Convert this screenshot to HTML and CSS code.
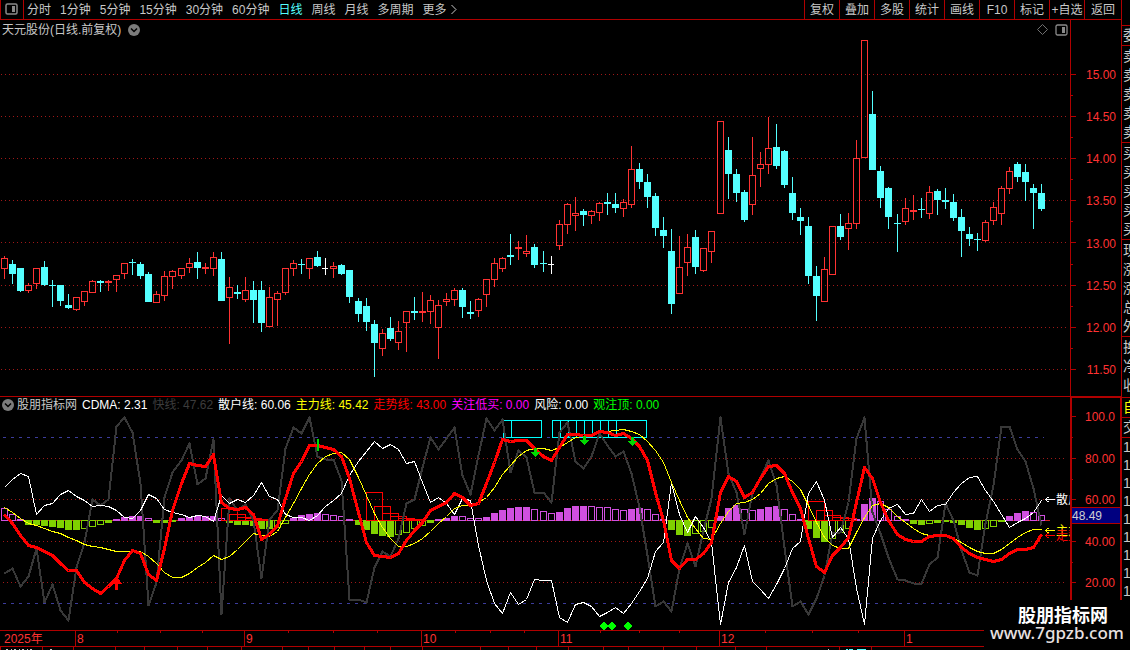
FILE: index.html
```html
<!DOCTYPE html>
<html lang="zh-CN">
<head>
<meta charset="utf-8">
<title>天元股份 日线</title>
<link rel="stylesheet" href="styles.css">
</head>
<body>
<div class="terminal">
  <main class="main">
    <header class="toolbar">
      <button class="panel-toggle" aria-label="侧栏">
        <svg width="13" height="12" viewBox="0 0 13 12"><rect x="1" y="1" width="11" height="10" rx="1.500" fill="none" stroke="#8a8a8a" stroke-width="1.500"/><rect x="7" y="3" width="3" height="6" fill="#8a8a8a"/></svg>
      </button>
      <nav class="periods">
        <button>分时</button><button>1分钟</button><button>5分钟</button><button>15分钟</button><button>30分钟</button><button>60分钟</button><button class="active">日线</button><button>周线</button><button>月线</button><button>多周期</button><button class="more">更多<svg width="6" height="11" viewBox="0 0 6 11"><path d="M.5 1L5 5.500L.5 10" fill="none" stroke="#c8c8c8"/></svg></button>
      </nav>
      <div class="tools">
        <button>复权</button><button>叠加</button><button>多股</button><button>统计</button><button>画线</button><button>F10</button><button>标记</button><button>+自选</button><button class="last">返回</button>
      </div>
    </header>

    <section class="price">
      <div class="plot">
        <div class="title">
          <h1>天元股份(日线.前复权)</h1>
          <button class="round" aria-label="展开"><svg width="12" height="12" viewBox="0 0 12 12"><circle cx="6" cy="6" r="6" fill="#7c7c7c"/><path d="M3 4.500L6 7.500L9 4.500" fill="none" stroke="#000" stroke-width="1.500"/></svg></button>
          <div class="title-icons">
            <svg width="11" height="11" viewBox="0 0 11 11"><path d="M5.500 .5L10.500 5.500L5.500 10.500L.5 5.500Z" fill="none" stroke="#707070"/></svg>
            <svg width="13" height="12" viewBox="0 0 13 12"><rect x="1" y="1" width="11" height="10" rx="1.500" fill="none" stroke="#8a8a8a" stroke-width="1.300"/><rect x="7" y="3" width="3" height="6" fill="#8a8a8a"/></svg>
          </div>
        </div>
        <svg class="chart" id="candles" viewBox="0 39 1070 357" preserveAspectRatio="none"></svg>
      </div>
      <div class="axis">
        <svg class="ticks" viewBox="0 20 6 376" preserveAspectRatio="none"><path stroke="#b00000" d="M0 74.500h5M0 95.500h2M0 116.500h5M0 137.500h2M0 158.500h5M0 179.500h2M0 200.500h5M0 221.500h2M0 242.500h5M0 264.500h2M0 285.500h5M0 306.500h2M0 327.500h5M0 348.500h2M0 369.500h5"/></svg>
        <ol class="scale price-scale"><li>15.00</li><li>14.50</li><li>14.00</li><li>13.50</li><li>13.00</li><li>12.50</li><li>12.00</li><li>11.50</li></ol>
      </div>
    </section>

    <section class="indicator">
      <div class="plot">
        <div class="legend">
          <button class="round" aria-label="展开"><svg width="12" height="12" viewBox="0 0 12 12"><circle cx="6" cy="6" r="6" fill="#7c7c7c"/><path d="M3 4.500L6 7.500L9 4.500" fill="none" stroke="#000" stroke-width="1.500"/></svg></button>
          <span class="name">股朋指标网</span><span class="white">CDMA: 2.31</span><span class="dim">快线: 47.62</span><span class="white">散户线: 60.06</span><span class="yellow">主力线: 45.42</span><span class="red">走势线: 43.00</span><span class="magenta">关注低买: 0.00</span><span class="white">风险: 0.00</span><span class="green">观注顶: 0.00</span>
        </div>
        <svg class="chart" id="lines" viewBox="0 413 1070 217" preserveAspectRatio="none"></svg>
      </div>
      <div class="axis boxed">
        <svg class="ticks" viewBox="0 398 6 232" preserveAspectRatio="none"><path stroke="#b00000" d="M0 416.500h4M0 437.500h1M0 458.500h4M0 479.500h1M0 499.500h4M0 541.500h4M0 562.500h1M0 582.500h4"/></svg>
        <ol class="scale ind-scale"><li>100.0</li><li>80.00</li><li>60.00</li><li>40.00</li><li>20.00</li></ol>
        <output class="cursor-value">48.49</output>
      </div>
    </section>

    <div class="dates">
      <span class="year">2025年</span><span>8</span><span>9</span><span>10</span><span>11</span><span>12</span><span>1</span>
      <svg class="date-ticks" viewBox="0 631 1121 15" preserveAspectRatio="none"><path stroke="#b00000" d="M117.500 631v2M160.500 631v2M202.500 631v2M288.500 631v2M333.500 631v2M377.500 631v2M455.500 631v2M490.500 631v2M524.500 631v2M600.500 631v2M639.500 631v2M679.500 631v2M765.500 631v2M812.500 631v2M858.500 631v2"/></svg>
    </div>
    <div class="strip">
      <svg viewBox="0 647 1121 3" preserveAspectRatio="none" shape-rendering="crispEdges"><path stroke="#b00000" d="M.5 647v3M42.500 647v3M73.500 647v3M115.500 647v3M144.500 647v3M177.500 647v3M207.500 647v3M241.500 647v3M282.500 647v3M308.500 647v3M334.500 647v3M364.500 647v3M390.500 647v3M422.500 647v3M480.500 647v3M508.500 647v3M536.500 647v3M568.500 647v3M603.500 647v3M628.500 647v3M663.500 647v3M696.500 647v3M735.500 647v3M766.500 647v3M839.500 647v3M871.500 647v3"/><path stroke="#c8c8c8" stroke-dasharray="2 3 1 2" d="M6 649.500h28M50 649.500h2M828 649.500h1"/><path stroke="#54ffff" d="M846 649.500h2M849 649.500h4M857 649.500h9"/></svg>
    </div>
  </main>

  <aside class="side">
    <div class="group first"><span>委比</span></div>
    <div class="group"><span>卖五</span><span>卖四</span><span>卖三</span><span>卖二</span><span>卖一</span></div>
    <div class="group"><span>买一</span><span>买二</span><span>买三</span><span>买四</span><span>买五</span></div>
    <div class="group"><span>现价</span><span>涨跌</span><span>涨幅</span><span>总量</span><span>外盘</span></div>
    <div class="group short"><span>换手</span><span>净资</span><span>收益</span></div>
    <div class="group tab yellow"><span>自选</span></div>
    <div class="group tab"><span>交易</span></div>
    <div class="trades"><span>1</span><span>1</span><span>1</span><span>1</span><span>1</span><span>1</span><span>1</span><span>1</span><span>1</span></div>
  </aside>

  <div class="brand"><strong>股朋指标网</strong><span>www.7gpzb.com</span></div>
</div>
<script src="chart.js"></script>
</body>
</html>
```

FILE: styles.css
```css
* { box-sizing: border-box; }

body {
  margin: 0;
  background: #000;
  color: #c8c8c8;
  font: 12px/16px "Liberation Sans", "Noto Sans CJK SC", sans-serif;
}

button {
  margin: 0;
  padding: 0;
  border: 0;
  background: none;
  color: inherit;
  font: inherit;
  white-space: nowrap;
}

svg { display: block; }

.terminal {
  position: relative;
  display: grid;
  grid-template-columns: minmax(0, 1fr) 9px;
  height: 100vh;
  overflow: hidden;
}

.main {
  display: flex;
  flex-direction: column;
  min-width: 0;
  min-height: 0;
}

/* toolbar */
.toolbar {
  display: flex;
  flex: none;
  height: 20px;
  border-bottom: 1px solid #b00000;
}

.panel-toggle {
  display: flex;
  align-items: center;
  padding: 0 5px 2px 4px;
  border-left: 1px solid #b00000;
  border-right: 1px solid #b00000;
}

.periods {
  display: flex;
  gap: 9px;
  padding-left: 3px;
}

.periods .active { color: #54ffff; }

.more {
  display: flex;
  align-items: center;
  gap: 4px;
}

.tools {
  display: flex;
  margin-left: auto;
}

.tools button {
  width: 35px;
  border-left: 1px solid #b00000;
}

.tools .last { width: 37px; }

/* chart panes */
.price, .indicator {
  display: flex;
  min-height: 0;
}

.price { flex: 376 1 376px; }

.indicator {
  flex: 234 1 234px;
  border-top: 1px solid #b00000;
}

.plot {
  display: flex;
  flex: 1;
  flex-direction: column;
  min-width: 0;
  min-height: 0;
}

.chart {
  flex: 1;
  width: 100%;
  min-height: 0;
  shape-rendering: crispEdges;
}

.title {
  display: flex;
  flex: none;
  align-items: center;
  gap: 7px;
  height: 19px;
  padding: 0 2px 0 2px;
}

.title h1 {
  margin: 0;
  font-size: 12px;
  font-weight: 400;
}

.title-icons {
  display: flex;
  align-items: center;
  gap: 7px;
  margin-left: auto;
}

.legend {
  display: flex;
  flex: none;
  align-items: center;
  gap: 5px;
  height: 16px;
  padding-left: 2px;
  white-space: nowrap;
}

.legend .round { margin-right: -2px; }

.white { color: #fff; }
.dim { color: #3c3c3c; }
.yellow { color: #ff0; }
.red { color: #f00; }
.magenta { color: #f0f; }
.green { color: #0f0; }

.axis {
  position: relative;
  display: flex;
  flex: none;
  width: 51px;
  border-left: 1px solid #b00000;
  color: #ff3232;
}

.boxed {
  border-top: 1px solid #b00000;
  border-right: 1px solid #b00000;
  border-left-width: 2px;
}

.ticks {
  width: 6px;
  height: 100%;
  shape-rendering: crispEdges;
}

.scale {
  display: flex;
  flex: 1;
  flex-direction: column;
  justify-content: space-between;
  margin: 0;
  padding: 0 5px 0 0;
  list-style: none;
  text-align: right;
}

.price-scale { padding-top: 47px; padding-bottom: 18px; }
.ind-scale { padding-top: 11px; padding-bottom: 39px; }

.cursor-value {
  position: absolute;
  top: 47%;
  left: 0;
  right: 0;
  height: 17px;
  border-top: 1px solid #b00000;
  border-bottom: 1px solid #b00000;
  background: #000080;
  color: #d0d0d0;
}

/* date strip */
.dates {
  position: relative;
  display: grid;
  flex: none;
  grid-template-columns: 75fr 169fr 177fr 137fr 161fr 185fr 217fr;
  height: 16px;
  border-top: 1px solid #b00000;
  color: #ff3232;
}

.dates span {
  padding-left: 1px;
  border-left: 1px solid #b00000;
}

.dates .year { padding-left: 4px; border-left: 0; }

.date-ticks {
  position: absolute;
  inset: 0;
  width: 100%;
  height: 100%;
}

.strip {
  flex: none;
  height: 4px;
  border-top: 1px solid #b00000;
}

.strip svg { width: 100%; height: 3px; }

/* quote column */
.side {
  overflow: hidden;
  padding-top: 25px;
  border-left: 1px solid #b00000;
  font-size: 14px;
  line-height: 19px;
  white-space: nowrap;
}

.group {
  display: flex;
  flex-direction: column;
  padding: 1px 0 0 1px;
  border-bottom: 1px solid #b00000;
}

.first {
  padding-top: 0;
  border-top: 1px solid #b00000;
}

.short { padding-bottom: 2px; }
.tab { padding-top: 0; }

.trades {
  display: flex;
  flex-direction: column;
  padding-left: 1px;
  line-height: 18px;
}

.brand {
  position: absolute;
  right: 0;
  bottom: 0;
  display: flex;
  flex-direction: column;
  align-items: center;
  width: 146px;
  height: 50px;
  padding-top: 4px;
  background: #000;
  color: #fff;
}

.brand strong {
  padding-left: 12px;
  font: 700 18px/20px "Noto Sans CJK SC", sans-serif;
}

.brand span {
  color: #e8e0e0;
  font: 500 17px/18px "Noto Sans", sans-serif;
}
```

FILE: chart.js
```js
const NS = 'http://www.w3.org/2000/svg';
const RED = '#ff3232', CYAN = '#54ffff';

const xAt = i => 4 + 8 * i + Math.floor((i + 0.5) / 22.25);

function add(parent, tag, attrs, text) {
  const el = document.createElementNS(NS, tag);
  for (const k in attrs) el.setAttribute(k, attrs[k]);
  if (text) el.textContent = text;
  parent.appendChild(el);
  return el;
}

const nums = s => s.trim().split(/\s+/).map(Number);

// kind (r rising, c falling, w flat), high, body top, body bottom, low
const candles = `
r 256 258 269 279,c 260 264 274 284,c 268 268 291 292,r 283 285 291 293,r 268 268 284 289,
c 261 267 285 286,c 280 285 286 307,c 285 285 301 306,c 294 305 308 309,r 297 297 310 311,
r 291 291 302 306,r 280 281 293 293,c 280 281 283 292,r 280 281 283 291,r 275 275 280 292,
r 263 263 274 279,c 259 262 263 275,c 262 264 276 279,c 272 274 302 302,r 291 294 303 303,
r 271 276 296 301,r 270 271 277 289,r 268 268 276 279,r 258 263 268 273,c 252 262 268 279,
r 263 267 269 274,r 252 257 269 276,c 252 259 301 301,r 277 287 298 344,c 285 292 294 299,
r 277 290 300 302,c 281 290 300 323,c 281 290 323 332,r 287 297 327 327,r 291 293 300 326,
r 268 268 293 295,r 260 263 269 276,c 259 264 265 274,r 258 258 269 279,c 251 257 266 267,
w 258 268 269 275,r 262 266 269 278,c 264 265 274 275,c 270 270 297 303,c 298 301 314 322,
c 298 306 322 331,c 320 324 343 377,r 329 333 349 356,c 317 328 339 341,r 321 331 343 350,
r 311 311 323 352,c 297 311 313 320,r 292 311 313 322,r 295 300 312 324,r 300 305 328 359,
r 293 299 302 306,r 288 290 300 306,c 288 290 307 318,c 301 312 314 319,r 298 299 311 317,
r 279 279 295 307,r 258 263 280 287,r 257 258 269 272,c 234 255 257 265,r 241 247 249 260,
r 235 251 254 257,c 244 247 265 268,c 251 263 264 272,w 256 264 265 274,r 220 224 246 250,
r 203 204 225 234,r 197 213 216 231,c 209 211 215 226,r 210 211 216 224,r 202 203 213 221,
c 193 202 204 215,c 193 204 208 213,r 199 202 209 217,r 146 169 205 208,c 163 169 182 189,
c 174 182 197 208,c 193 196 228 236,c 217 230 236 248,c 229 251 304 314,r 236 267 294 294,
r 234 247 263 276,c 230 237 267 274,r 248 248 271 272,r 231 231 252 263,r 121 121 214 214,
c 137 150 174 199,c 169 174 193 202,c 190 192 220 222,r 137 175 205 215,r 152 164 169 187,
r 117 148 165 174,c 124 147 166 169,c 150 151 185 188,c 177 193 213 220,c 208 217 221 235,
c 217 226 276 284,c 266 276 296 321,r 257 269 302 302,r 226 226 275 275,c 214 226 237 240,
r 213 223 229 250,r 140 158 224 229,r 40 40 158 158,c 91 114 170 170,c 166 171 198 208,
c 187 188 217 229,c 214 223 224 252,r 198 208 222 225,r 195 210 212 220,c 198 209 210 218,
r 186 192 214 219,c 189 191 200 215,c 188 200 202 209,c 194 202 218 221,c 209 217 231 257,
c 227 234 239 246,c 233 239 240 251,r 220 222 241 242,r 202 207 221 225,r 186 188 214 225,
r 167 171 189 194,c 162 164 177 182,c 164 172 182 201,c 184 188 193 229,c 184 193 209 211`;

const main = document.getElementById('candles');
for (const y of [74, 116, 158, 200, 242, 285, 327, 369])
  add(main, 'path', { d: `M1 ${y + 0.5}H1067`, stroke: '#a01818', 'stroke-dasharray': '1 3' });

candles.split(',').forEach((row, i) => {
  const [kind, ...v] = row.trim().split(' ');
  const [high, top, bottom, low] = v.map(Number);
  const x = xAt(i);
  const color = { r: RED, c: CYAN, w: '#fff' }[kind];
  let wick = '';
  if (high < top) wick += `M${x + 0.5} ${high}V${top}`;
  if (low > bottom) wick += `M${x + 0.5} ${bottom}V${low}`;
  if (bottom - top === 1) wick = `M${x + 0.5} ${high}V${low}`;
  if (wick) add(main, 'path', { d: wick, stroke: color });
  if (kind === 'r' && bottom - top > 2)
    add(main, 'rect', { x: x - 2.5, y: top + 0.5, width: 6, height: bottom - top - 1, fill: 'none', stroke: color });
  else
    add(main, 'rect', { x: x - 3, y: top, width: kind === 'w' ? 6 : 7, height: bottom - top, fill: color });
});

const ind = document.getElementById('lines');
for (const y of [458, 499, 541, 582])
  add(ind, 'path', { d: `M3 ${y + 0.5}H1067`, stroke: '#a01818', 'stroke-dasharray': '1 3' });
for (const y of [437, 603])
  add(ind, 'path', { d: `M3 ${y + 0.5}H1044`, stroke: '#3c3c9c', 'stroke-dasharray': '3 5' });
add(ind, 'path', { d: 'M1 520.5H1050', stroke: '#d02020' });

// histogram: height above (+) or below (-) the zero line, h = hollow
const bars = `12h 6h 1 -4 -4 -5 -6 -7 -9 -9 -8h -6h -4h -2 1 3 4 4 2h -2
-2 -1 2 3 4 4 4 2h -2 -4 -4 -5 -8 -8 -7h -3h 2 5 6 7
6h 5h 4h 1 -4 -9 -13 -15 -16 -14h -12h -8h -5h -2 1 2 4 4h 2h 2h
3 7 10 12 13 13 11h 9h 7h 8 12 14 14 14h 13h 13h 11h 10h 11 12
11h 6h 1 -9 -14 -15 -13h -11h -7h 4 12 15 11h 10h 11 13 14 11h 6h 1
-8 -17 -21 -18h -12h -8h 1 16 22 19h 11h 4h 1 -3 -4 -3h -2 -1 -2 -4
-7 -9 -8h -6h -1 4 7 9 8h 5h`;
bars.trim().split(/\s+/).forEach((token, i) => {
  const v = parseInt(token, 10), hollow = token.endsWith('h');
  const color = v > 0 ? '#d050e0' : '#80d000';
  const x = xAt(i) - 3, y = v > 0 ? 520 - v : 520, h = Math.abs(v) + 1;
  if (hollow) add(ind, 'rect', { x: x + 0.5, y: y + 0.5, width: 6, height: h - 1, fill: '#000', stroke: color });
  else add(ind, 'rect', { x, y, width: 7, height: h, fill: color });
});

// stepped outline boxes, two bars wide, hanging on the zero line
for (const [start, tops] of [[27, [508, 514, 517, 518, 519]], [45, [492, 506, 513, 516, 518, 519]], [100, [501, 510, 515, 517, 518]]])
  tops.forEach((y, k) => {
    const x = xAt(start + k);
    add(ind, 'rect', { x: x + 0.5, y: y + 0.5, width: xAt(start + k + 2) - x, height: 520 - y, fill: 'none', stroke: '#f00' });
  });

const fast = nums(`573 568 586 576 548 602 584 610 620 567 542 499 505 499 426 417 432 483 605 582
497 472 460 443 484 478 439 614 498 510 504 520 578 519 510 448 427 433 417 456
459 459 480 599 599 602 567 551 556 538 503 499 467 437 449 438 427 475 494 455
418 430 419 472 450 457 492 492 502 432 422 461 468 456 433 445 456 451 473 507
555 606 601 611 568 543 566 530 498 417 473 492 534 492 477 460 485 547 606 601
614 598 575 533 532 502 438 417 512 533 557 579 580 583 583 564 557 503 520 550
572 575 523 485 426 426 449 461 488 525`);
const retail = nums(`487 479 473 476 514 505 503 494 490 496 500 506 505 506 510 517 518 510 494 498
509 512 514 517 515 516 521 495 503 499 502 495 482 496 499 514 517 517 520 515
506 500 493 475 461 451 441 448 444 449 463 461 482 502 497 503 514 498 500 545
580 603 613 592 604 599 579 580 580 617 622 604 602 606 616 612 607 613 603 591
578 551 542 482 514 532 516 527 542 624 582 567 545 581 589 598 584 568 548 541
493 481 500 537 527 538 588 624 538 520 508 504 514 513 499 511 505 504 492 483
477 476 490 501 514 527 522 518 512 500`);
const major = nums(`507 512 518 523 525 528 531 533 537 540 544 546 547 549 551 551 551 551 556 563
572 577 577 573 567 562 555 559 556 549 541 533 535 536 531 517 503 488 474 463
456 453 452 459 477 495 513 527 538 546 546 543 538 531 523 516 508 505 505 502
497 487 474 465 456 450 448 448 450 447 442 437 436 435 432 431 430 429 431 434
441 450 462 482 500 517 528 538 539 523 511 503 502 499 493 483 478 476 481 489
505 522 537 545 548 548 532 517 505 503 507 516 522 528 533 535 536 536 538 542
547 551 553 553 549 543 537 532 529 529`);
const trend = nums(`514 523 535 545 547 551 555 563 570 570 582 588 593 586 578 560 550 553 574 580
548 510 483 463 465 466 454 502 508 509 507 514 539 534 525 498 473 461 445 445
447 449 456 478 512 542 555 556 557 553 540 530 522 510 506 502 493 497 505 503
483 462 439 441 440 440 448 456 460 447 434 434 435 435 431 432 435 433 438 446
460 492 520 560 568 559 559 553 542 492 476 481 497 492 478 466 465 473 492 508
538 566 572 555 547 537 502 467 478 502 520 534 539 541 541 536 535 535 538 547
553 557 559 561 559 553 549 549 547 534`);

function line(ys, color, width) {
  const points = ys.map((y, i) => `${xAt(i) + 0.5},${y + 0.5}`).join(' ');
  add(ind, 'polyline', { points, fill: 'none', stroke: color, 'stroke-width': width, 'stroke-linejoin': 'round' });
}

add(ind, 'path', {
  d: 'M503.5 420.5H541.5V437.5H503.5ZM511.5 420V437M552.5 420.5H646.5V437.5H552.5ZM560.5 420V437M568.5 420V437M576.5 420V437M584.5 420V437M592.5 420V437M600.5 420V437M608.5 420V437M616.5 420V437',
  fill: 'none', stroke: '#00ffff',
});
line(fast, '#383838', 2);
line(retail, '#fff', 1);
line(major, '#ff0', 1);
line(trend, '#f00', 3);

for (const [x, y] of [[535, 448], [584, 436], [632, 437]])
  add(ind, 'path', { d: `M${x - 1} ${y}h3v4h3l-4.500 5l-4.500 -5h3z`, fill: '#00d800' });
add(ind, 'rect', { x: 317, y: 439, width: 2, height: 12, fill: '#00d800' });
add(ind, 'path', { d: 'M116.500 576L122 584H118V590H115V584H111Z', fill: '#f00' });
for (const x of [604, 612, 628])
  add(ind, 'path', { d: `M${x} 621.500l4.500 4.500l-4.500 4l-4.500 -4z`, fill: '#0f0' });

for (const [label, y, color] of [['散户线', 499, '#fff'], ['主力线', 530, '#ff0'], ['走势线', 535, '#f00']]) {
  add(ind, 'path', { d: `M1045 ${y + 0.5}H1055M1048.500 ${y - 2}L1045.500 ${y + 0.5}L1048.500 ${y + 3}`, fill: 'none', stroke: color });
  add(ind, 'text', { x: 1056, y: y + 5, fill: color, 'font-size': 12 }, label);
}
```
